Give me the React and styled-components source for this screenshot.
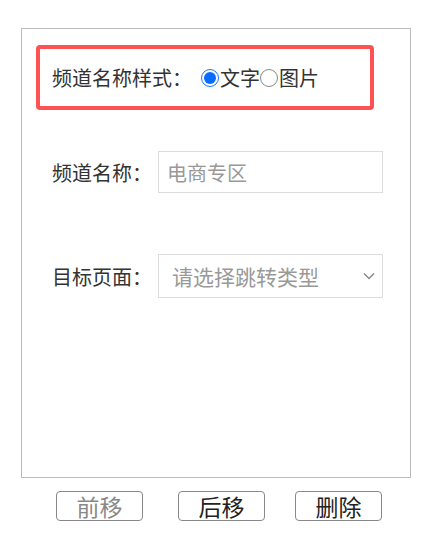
import React from 'react';
import styled, { createGlobalStyle } from 'styled-components';

const Global = createGlobalStyle`
  body {
    margin: 0;
    background: #fff;
    font-family: "Noto Sans CJK SC", "Noto Sans", sans-serif;
    color: #333;
  }
  * { box-sizing: border-box; }
`;

const Page = styled.div`
  padding: 28px 0 0 21px;
`;

const Panel = styled.div`
  width: 390px;
  height: 450px;
  border: 1px solid #bbb;
  padding-top: 16px;
`;

const Highlight = styled.div`
  margin-left: 14px;
  width: 338px;
  height: 65px;
  border: 4px solid #ff5252;
  border-radius: 4px;
  display: flex;
  align-items: center;
  padding-left: 12px;
  font-size: 20px;
  line-height: 1;
`;

const Title = styled.span`
  width: 149px;
  white-space: nowrap;
`;

const RadioItem = styled.label`
  display: flex;
  align-items: center;
  gap: 1px;
`;

const Radio = styled.span`
  width: 18px;
  height: 18px;
  border-radius: 50%;
  border: 1px solid ${p => (p.checked ? '#1677ff' : '#888')};
  display: flex;
  align-items: center;
  justify-content: center;
  &::after {
    content: '';
    display: ${p => (p.checked ? 'block' : 'none')};
    width: 12px;
    height: 12px;
    border-radius: 50%;
    background: #0a6cff;
  }
`;

const Row = styled.div`
  display: flex;
  align-items: center;
  margin-top: ${p => p.top}px;
  padding-left: 30px;
`;

const Label = styled.span`
  width: 106px;
  font-size: 20px;
  color: #333;
  white-space: nowrap;
`;

const Field = styled.div`
  width: 225px;
  height: ${p => p.h}px;
  border: 1px solid #ddd;
  display: flex;
  align-items: center;
  justify-content: space-between;
  padding: 0 7px 0 ${p => p.pl}px;
  font-size: ${p => p.fs}px;
  color: #999;
`;

const Buttons = styled.div`
  display: flex;
  padding: 13px 0 0 35px;
`;

const Button = styled.button`
  width: 87px;
  height: 30px;
  margin-left: ${p => p.ml}px;
  border: 1px solid #888;
  border-radius: 4px;
  background: #fff;
  font-family: inherit;
  font-size: 23px;
  line-height: 1;
  padding: 0;
  color: ${p => (p.disabled ? '#888' : '#222')};
`;

export default function App() {
  return (
    <Page>
      <Global />
      <Panel>
        <Highlight>
          <Title>频道名称样式：</Title>
          <RadioItem>
            <Radio checked />文字
          </RadioItem>
          <RadioItem>
            <Radio />图片
          </RadioItem>
        </Highlight>
        <Row top={41}>
          <Label>频道名称：</Label>
          <Field h={42} pl={8} fs={20}>电商专区</Field>
        </Row>
        <Row top={61}>
          <Label>目标页面：</Label>
          <Field h={44} pl={13} fs={21}>
            请选择跳转类型
            <svg width="12" height="8" viewBox="0 0 12 8">
              <path d="M1 1.5 L6 6.5 L11 1.5" fill="none" stroke="#888" strokeWidth="1.5" />
            </svg>
          </Field>
        </Row>
      </Panel>
      <Buttons>
        <Button disabled ml={0}>前移</Button>
        <Button ml={35}>后移</Button>
        <Button ml={30}>删除</Button>
      </Buttons>
    </Page>
  );
}
